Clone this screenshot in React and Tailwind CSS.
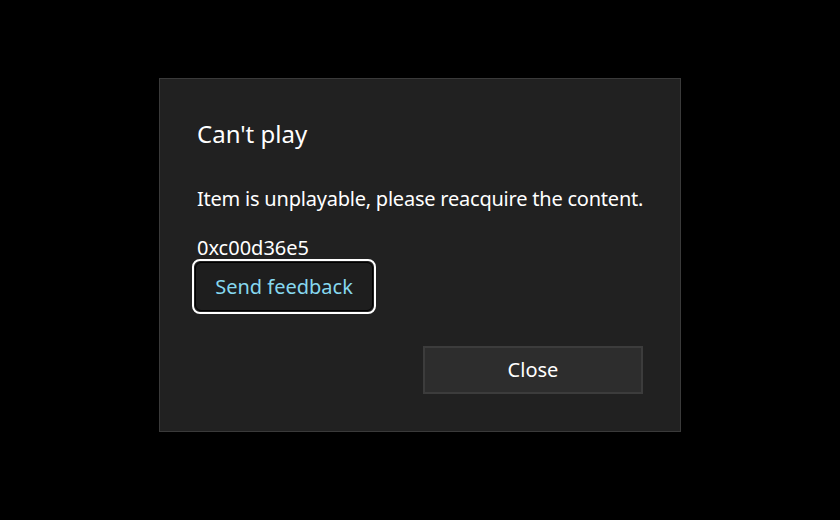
export default function App() {
  return (
    <div className="w-[840px] h-[520px] bg-black flex items-start justify-center pt-[78px]" style={{ fontFamily: '"Noto Sans", "Open Sans", sans-serif' }}>
      <div className="w-[522px] h-[354px] bg-[#212121] border border-[#3a3a3a] flex flex-col px-[37px]">
        <div className="text-white text-[24px] leading-[32px] mt-[39px]">Can't play</div>
        <div className="text-white text-[20px] leading-[28px] mt-[35px] whitespace-nowrap tracking-[-0.22px]">Item is unplayable, please reacquire the content.</div>
        <div className="text-white text-[20px] leading-[28px] mt-[21px]">0xc00d36e5</div>
        <div className="mt-[-3px] self-start -ml-[5px]">
          <div className="rounded-[8px] border-2 border-white p-px">
            <div className="rounded-[6px] bg-[#1e1e1e] border border-black w-[178px] h-[49px] flex items-center justify-center text-[#86d8ef] text-[20px]">Send feedback</div>
          </div>
        </div>
        <div className="flex justify-end mt-[32px]">
          <div className="w-[220px] h-[48px] bg-[#2d2d2d] border-2 border-[#3c3c3c] flex items-center justify-center text-white text-[20px]">Close</div>
        </div>
      </div>
    </div>
  );
}
